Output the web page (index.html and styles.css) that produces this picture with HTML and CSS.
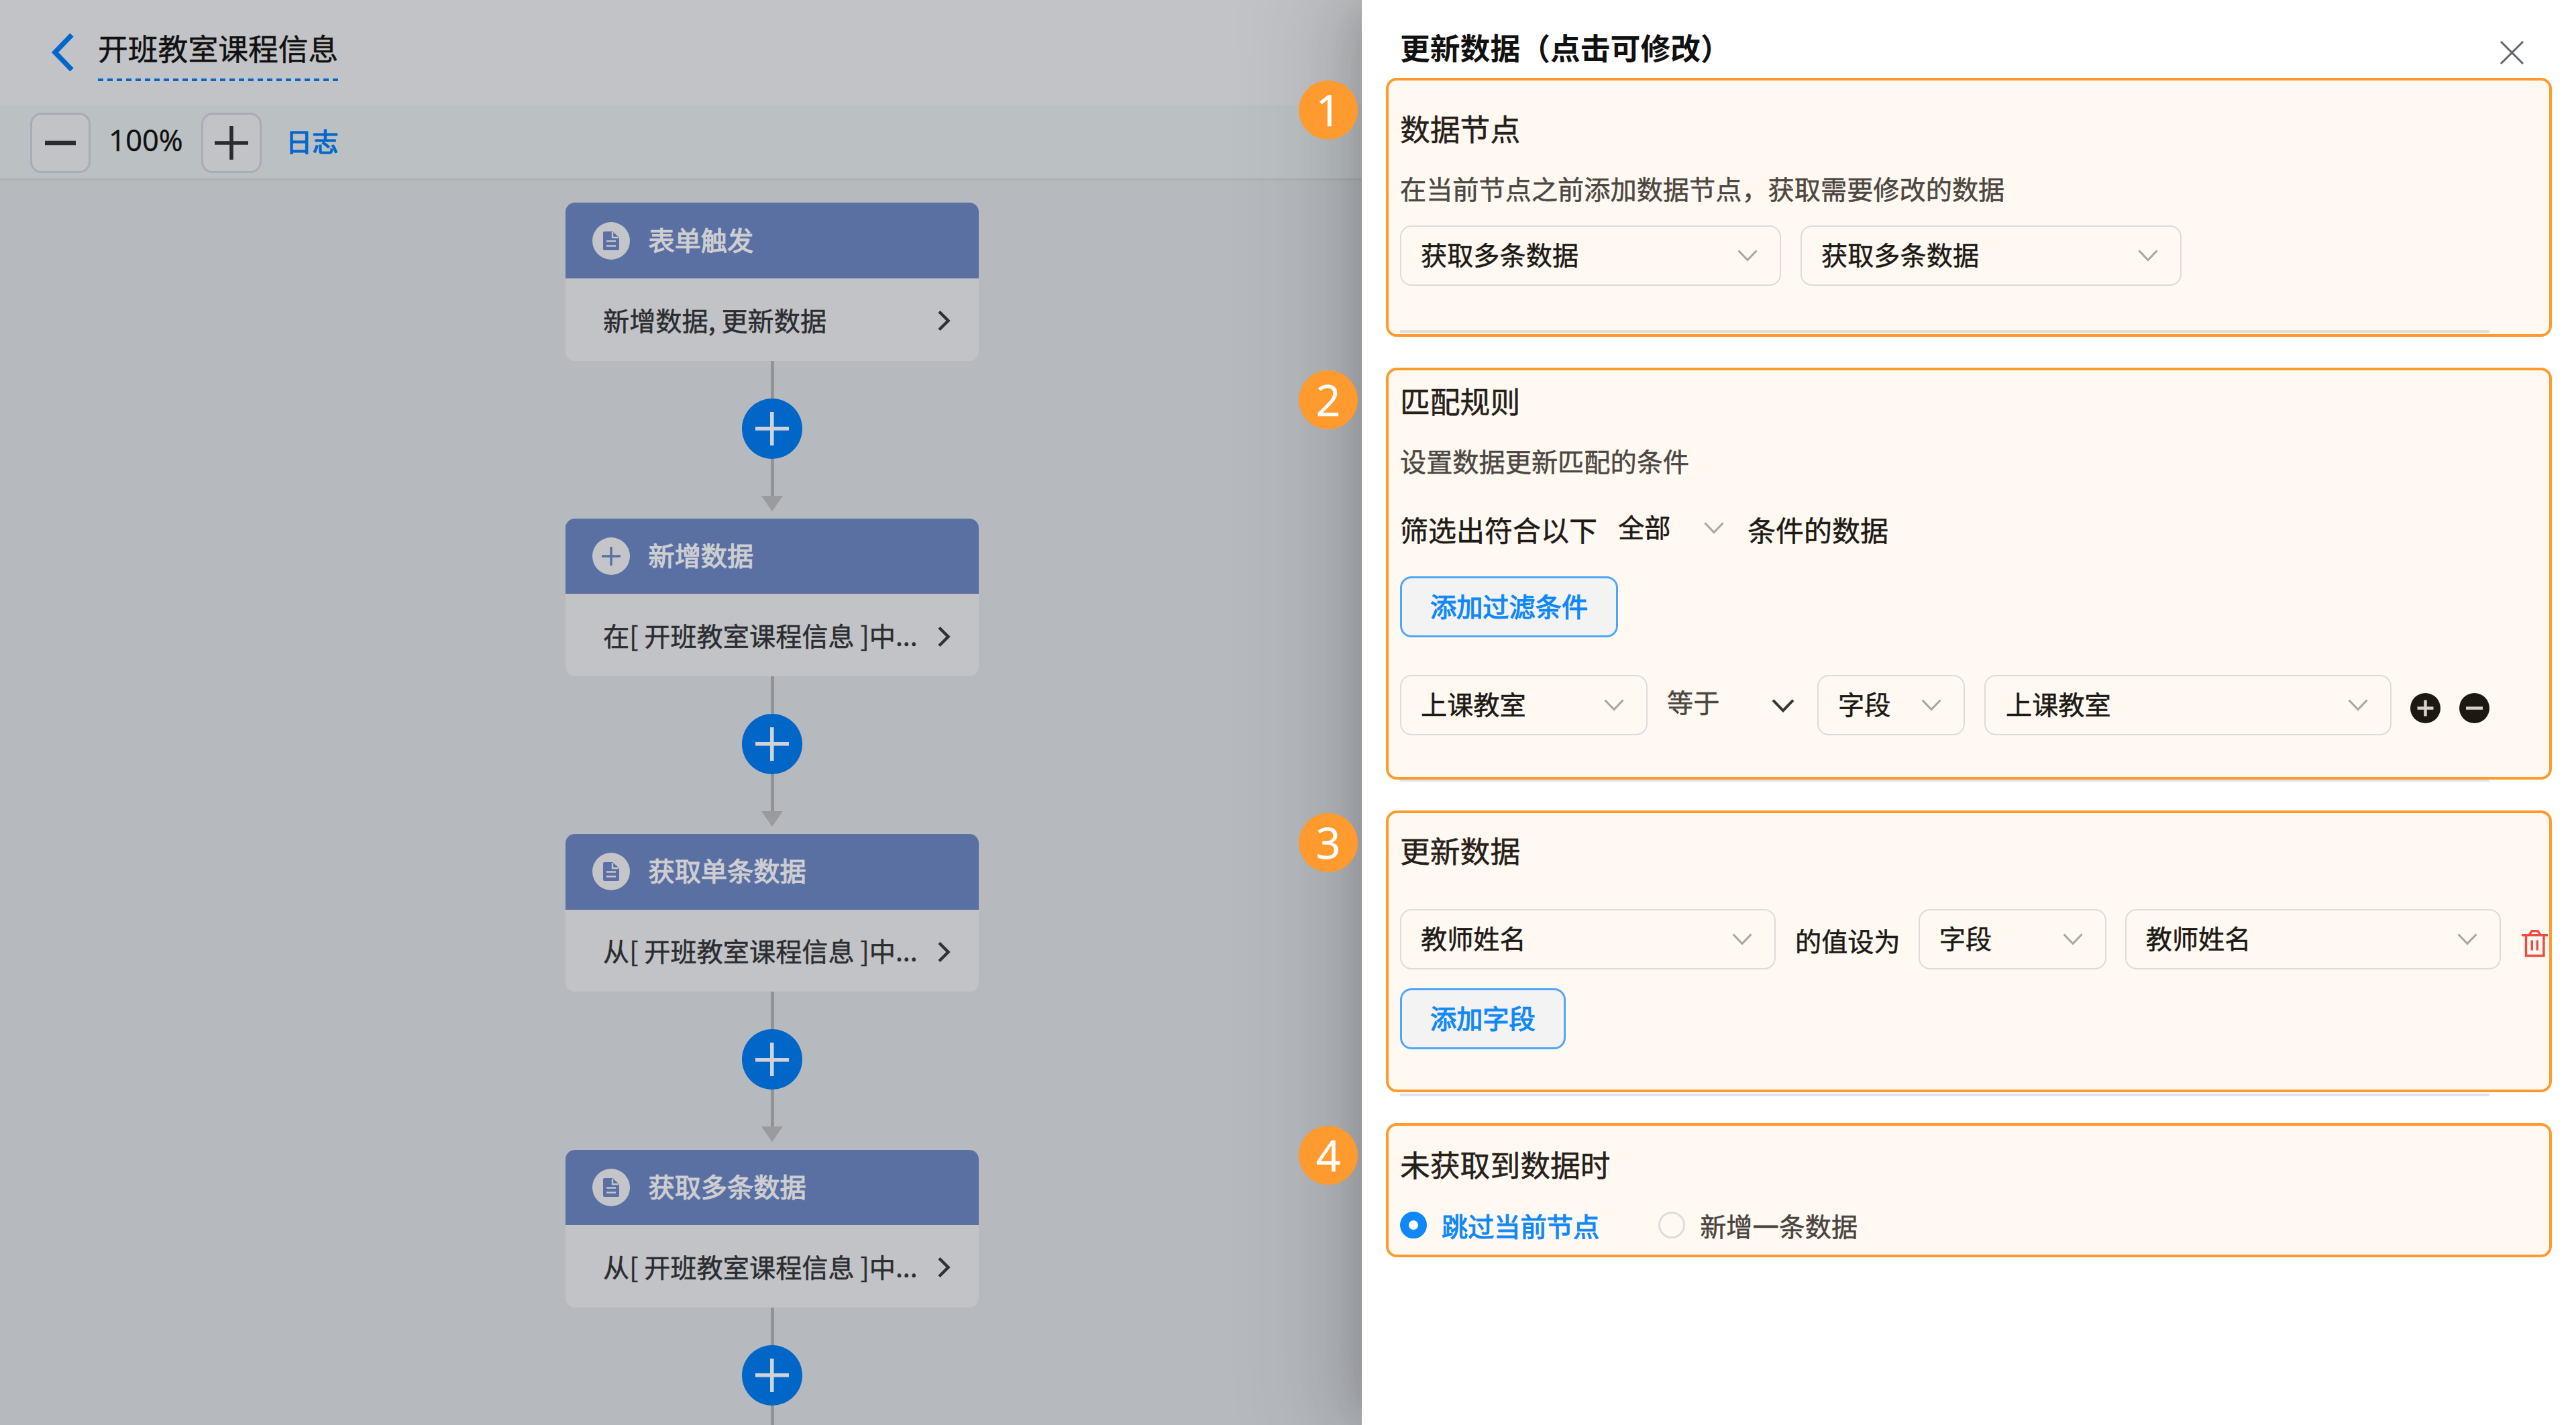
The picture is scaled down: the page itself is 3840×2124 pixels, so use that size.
FILE: index.html
```html
<!DOCTYPE html>
<html lang="zh-CN">
<head>
<meta charset="utf-8">
<title>开班教室课程信息</title>
<link rel="stylesheet" href="styles.css">
</head>
<body>
<svg class="sprite" width="0" height="0">
  <symbol id="down" viewBox="0 0 30 18"><path d="M1.5 1.5 15 15.5 28.5 1.5"/></symbol>
  <symbol id="next" viewBox="0 0 20 32"><path d="M3 2.5 16.5 16 3 29.5"/></symbol>
  <symbol id="doc" viewBox="0 0 24 28"><path d="M2 0H14L24 9V26Q24 28 22 28H2Q0 28 0 26V2Q0 0 2 0Z" fill="#5a70a3"/><path d="M14 1V9H23M5 14.5H19M5 21.5H19" fill="none" stroke="#c4c5c8" stroke-width="2.4"/></symbol>
</svg>
<div class="app">
  <main class="editor">
    <header class="header">
      <svg class="back" viewBox="0 0 34 58"><path d="M30 3 5 29 30 55"/></svg>
      <h1 class="flow-name">开班教室课程信息</h1>
    </header>
    <div class="toolbar">
      <button class="zoom-btn"><svg viewBox="0 0 50 50"><path d="M2 25H48" stroke-width="6.5"/></svg></button>
      <span class="zoom-value">100%</span>
      <button class="zoom-btn"><svg viewBox="0 0 50 50"><path d="M0 25H50M25 0V50" stroke-width="5.6"/></svg></button>
      <a class="log">日志</a>
    </div>
    <div class="canvas">
      <article class="node">
        <div class="node-head"><span class="node-icon"><svg class="doc"><use href="#doc"/></svg></span><span class="node-name">表单触发</span></div>
        <div class="node-body"><span>新增数据, 更新数据</span><svg class="next"><use href="#next"/></svg></div>
      </article>
      <div class="link"><span class="add"></span><i class="arrow"></i></div>
      <article class="node">
        <div class="node-head"><span class="node-icon"><svg class="cross" viewBox="0 0 28 28"><path d="M0 14H28M14 0V28"/></svg></span><span class="node-name">新增数据</span></div>
        <div class="node-body"><span>在[ 开班教室课程信息 ]中...</span><svg class="next"><use href="#next"/></svg></div>
      </article>
      <div class="link"><span class="add"></span><i class="arrow"></i></div>
      <article class="node">
        <div class="node-head"><span class="node-icon"><svg class="doc"><use href="#doc"/></svg></span><span class="node-name">获取单条数据</span></div>
        <div class="node-body"><span>从[ 开班教室课程信息 ]中...</span><svg class="next"><use href="#next"/></svg></div>
      </article>
      <div class="link"><span class="add"></span><i class="arrow"></i></div>
      <article class="node">
        <div class="node-head"><span class="node-icon"><svg class="doc"><use href="#doc"/></svg></span><span class="node-name">获取多条数据</span></div>
        <div class="node-body"><span>从[ 开班教室课程信息 ]中...</span><svg class="next"><use href="#next"/></svg></div>
      </article>
      <div class="link"><span class="add"></span></div>
    </div>
  </main>

  <aside class="drawer">
    <header class="drawer-head">
      <h2 class="drawer-title">更新数据（点击可修改）</h2>
      <svg class="close" viewBox="0 0 36 36"><path d="M1 1 35 35M35 1 1 35"/></svg>
    </header>

    <section class="panel panel-source">
      <span class="badge">1</span>
      <h3>数据节点</h3>
      <p class="desc">在当前节点之前添加数据节点，获取需要修改的数据</p>
      <div class="row">
        <div class="select w568">获取多条数据<svg class="down"><use href="#down"/></svg></div>
        <div class="select w568">获取多条数据<svg class="down"><use href="#down"/></svg></div>
      </div>
      <hr class="rule">
    </section>

    <section class="panel panel-match">
      <span class="badge">2</span>
      <h3>匹配规则</h3>
      <p class="desc">设置数据更新匹配的条件</p>
      <div class="sentence">筛选出符合以下<span class="inline-select">全部<svg class="down"><use href="#down"/></svg></span>条件的数据</div>
      <button class="btn">添加过滤条件</button>
      <div class="row">
        <div class="select w369">上课教室<svg class="down"><use href="#down"/></svg></div>
        <div class="operator">等于<svg class="down dark"><use href="#down"/></svg></div>
        <div class="select w220">字段<svg class="down"><use href="#down"/></svg></div>
        <div class="select w606">上课教室<svg class="down"><use href="#down"/></svg></div>
        <svg class="round" viewBox="0 0 45 45"><circle cx="22.5" cy="22.5" r="22.5"/><path d="M10.5 22.5H34.5M22.5 10.5V34.5"/></svg>
        <svg class="round" viewBox="0 0 45 45"><circle cx="22.5" cy="22.5" r="22.5"/><path d="M10 22.5H35"/></svg>
      </div>
    </section>
    <hr class="rule rule-match">

    <section class="panel panel-update">
      <span class="badge">3</span>
      <h3>更新数据</h3>
      <div class="row">
        <div class="select w560">教师姓名<svg class="down"><use href="#down"/></svg></div>
        <span class="set-to">的值设为</span>
        <div class="select w280">字段<svg class="down"><use href="#down"/></svg></div>
        <div class="select w560">教师姓名<svg class="down"><use href="#down"/></svg></div>
        <svg class="trash" viewBox="0 0 39 41"><path d="M0 7.7H39M6.5 7.7V38.5H33V7.7M11.5 7.5 15 1.7H24L28 7.5M15.3 15.5V30.5M23.3 15.5V30.5"/></svg>
      </div>
      <button class="btn">添加字段</button>
    </section>
    <hr class="rule rule-update">

    <section class="panel panel-empty">
      <span class="badge">4</span>
      <h3>未获取到数据时</h3>
      <div class="radios">
        <label class="radio on"><i></i>跳过当前节点</label>
        <label class="radio"><i></i>新增一条数据</label>
      </div>
    </section>
  </aside>
</div>
</body>
</html>
```
FILE: styles.css
```css
* { box-sizing: border-box; }
body {
  margin: 0;
  font-family: "Noto Sans CJK SC", "Noto Sans", sans-serif;
  font-size: 39.2px;
  line-height: 56px;
  color: #1d1a15;
  -webkit-text-stroke: .5px currentColor;
}
h1, h2, h3, p { margin: 0; font-weight: 400; }
svg { display: block; fill: none; flex: none; overflow: visible; }
button { font: inherit; padding: 0; margin: 0; }
.sprite { position: absolute; }
.app {
  width: 3840px;
  height: 2124px;
  overflow: hidden;
  display: grid;
  grid-template-columns: 2030px 1810px;
}

/* Flow editor, dimmed behind the drawer */
.editor { background: #b6b9be; height: 2124px; overflow: hidden; }
.header {
  height: 157px;
  background: #c2c3c6;
  display: flex;
  align-items: flex-start;
  padding: 46px 0 0 77px;
}
.back { width: 34px; height: 58px; margin: 3px 35px 0 0; stroke: #0067cb; stroke-width: 7.5; }
.flow-name {
  font-size: 44.8px;
  line-height: 50px;
  height: 75px;
  color: #111;
  background: repeating-linear-gradient(90deg, #0067cb 0 8.4px, transparent 8.4px 14px) 0 100% / 100% 4px no-repeat;
}
.toolbar {
  height: 112px;
  background: #bbc0c3;
  border-bottom: 3px solid #adafb2;
  display: flex;
  align-items: flex-start;
  padding: 11px 0 0 45px;
}
.zoom-btn {
  width: 90px;
  height: 90px;
  border: 3px solid #a9abb6;
  border-radius: 17px;
  background: #c2c3c6;
  display: grid;
  place-items: center;
}
.zoom-btn svg { width: 50px; height: 50px; stroke: #2a2b2e; }
.zoom-value {
  width: 165px;
  text-align: center;
  font-family: "Open Sans", "Noto Sans", sans-serif;
  font-size: 43.4px;
  line-height: 82px;
  color: #111;
}
.log { margin-left: 36px; line-height: 83px; color: #0067cb; -webkit-text-stroke-width: 1.2px; }

.canvas {
  padding: 33.4px 0 0 843px;
  width: 1459px;
  display: flex;
  flex-direction: column;
}
.node { height: 235.2px; flex: none; border-radius: 14px; overflow: hidden; background: #c2c3c6; }
.node-head {
  height: 112.5px;
  background: #5a70a3;
  color: #cdced1;
  display: flex;
  align-items: center;
  padding-left: 39.5px;
  gap: 28px;
  -webkit-text-stroke-width: 1.2px;
}
.node-name { padding-bottom: 6px; }
.node-icon {
  width: 56px;
  height: 56px;
  border-radius: 50%;
  background: #c4c5c8;
  display: grid;
  place-items: center;
}
.doc { width: 24px; height: 28px; }
.cross { width: 28px; height: 28px; stroke: #5a70a3; stroke-width: 3.5; }
.node-body {
  height: 122.7px;
  display: flex;
  align-items: center;
  justify-content: space-between;
  padding: 4px 42px 0 56px;
  color: #2b2d30;
}
.node-body span { padding-bottom: 5px; }
.next { width: 20px; height: 32px; stroke: #2f3134; stroke-width: 4.5; }
.link {
  height: 235.2px;
  flex: none;
  display: flex;
  flex-direction: column;
  align-items: center;
  padding-top: 56px;
  background: linear-gradient(#919395, #919395) 50% 0 / 5px 202px no-repeat;
}
.add {
  width: 90px;
  height: 90px;
  border-radius: 50%;
  background:
    linear-gradient(#cfd2d8, #cfd2d8) 50% 50% / 50px 5.6px no-repeat,
    linear-gradient(#cfd2d8, #cfd2d8) 50% 50% / 5.6px 50px no-repeat,
    #0067c8;
}
.arrow {
  margin-top: 55px;
  border: 16px solid transparent;
  border-bottom: 0;
  border-top: 23px solid #999b9e;
}

/* Settings drawer */
.drawer {
  position: relative;
  z-index: 1;
  background: #fff;
  padding: 0 36px;
  box-shadow: -17px 0 45px -22px rgba(0,0,0,.12), -25px 0 78px rgba(0,0,0,.08), -34px 0 134px 40px rgba(0,0,0,.09);
}
.drawer-head {
  height: 116px;
  padding: 45px 42px 0 21px;
  display: flex;
  justify-content: space-between;
}
.drawer-title {
  font-size: 44.8px;
  line-height: 50px;
  height: 76px;
  font-weight: 700;
  color: #111;
  -webkit-text-stroke-width: 0;
  background: repeating-linear-gradient(90deg, #7db9ee 0 8.4px, transparent 8.4px 14px) 0 100% / 100% 4px no-repeat;
}
.close { width: 35px; height: 35px; margin-top: 16px; stroke: #5f646b; stroke-width: 3; }
.panel {
  position: relative;
  border: 4px solid #ff9a2e;
  border-radius: 16px;
  background: #fff9f2;
  padding: 0 0 0 17px;
}
.panel h3 { font-size: 44.8px; color: #262019; }
.panel-source { height: 386px; padding-top: 43px; background-clip: padding-box; }
.panel-match { height: 614px; margin-top: 46px; padding-top: 17px; }
.panel-update { height: 420px; margin-top: 43px; padding-top: 27px; }
.panel-empty { height: 200px; margin-top: 40px; padding-top: 29px; }
.badge {
  position: absolute;
  left: -134px;
  top: 0;
  width: 88px;
  height: 88px;
  border-radius: 50%;
  background: #ff9a2e;
  color: #fff;
  font-family: "Open Sans", "Noto Sans", sans-serif;
  font-size: 64px;
  line-height: 88px;
  text-align: center;
}
.desc { color: #4d4741; margin-top: 33px; }
.row { display: flex; align-items: center; }
.select {
  height: 90px;
  border: 2.8px solid #dfdbd9;
  border-radius: 17px;
  display: flex;
  align-items: center;
  justify-content: space-between;
  padding: 0 33px 6px 29px;
}
.select .down { margin-top: 6px; }
.down { width: 30px; height: 18px; stroke: #aaa69f; stroke-width: 3; }
.down.dark { width: 34px; height: 20px; stroke: #3a3530; stroke-width: 3.6; }
.w568 { width: 568px; }
.w560 { width: 560px; }
.w369 { width: 369px; }
.w220 { width: 220px; }
.w280 { width: 280px; }
.w606 { width: 607px; }
.rule { margin: 0; border: 0; height: 4px; width: 1624px; background: #e2ded9; }

.panel-source .row { margin-top: 28px; gap: 29px; }
.panel-source .rule { margin-top: 66px; }

.sentence { display: flex; align-items: center; font-size: 42px; margin-top: 47px; }
.inline-select {
  display: flex;
  align-items: center;
  justify-content: space-between;
  font-size: 39.2px;
  width: 158px;
  margin: -10px 35px 0 31px;
}
.inline-select .down { margin-top: 6px; }
.btn {
  display: block;
  height: 91px;
  padding: 0 42px 5px;
  border: 3px solid #4fa6f8;
  border-radius: 17px;
  background: #f3f3f3;
  color: #1088f8;
  -webkit-text-stroke: 1.2px #1088f8;
}
.panel-match .btn { margin-top: 42px; }
.panel-match .row { margin-top: 56px; }
.operator {
  width: 190px;
  margin: -13px 34px 0 29px;
  display: flex;
  align-items: center;
  justify-content: space-between;
  color: #4d4741;
}
.operator .down { margin-top: 14px; }
.panel-match .w606 { margin: 0 28px 0 29px; padding-left: 30px; }
.round { width: 45px; height: 45px; margin: 9px 28px 0 0; stroke: #d8d2cb; stroke-width: 4.5; }
.round circle { fill: #1e1812; stroke: none; }
.rule-match { height: 3px; margin-left: 21px; background: #e3e3ea; }

.panel-update .row { margin-top: 60px; }
.set-to { margin: 2px 27px 0 29px; }
.panel-update .w280 { margin-right: 28px; }
.trash { width: 39px; height: 41px; margin: 12px 0 0 31px; stroke: #ee4a40; stroke-width: 3.4; }
.panel-update .btn { margin-top: 28px; }
.rule-update { margin: 2px 0 0 21px; background: #dfe3ea; }

.radios { display: flex; gap: 88px; margin-top: 35px; }
.radio { display: flex; align-items: center; gap: 22px; color: #4a443e; }
.radio i { width: 40px; height: 40px; border-radius: 50%; border: 3px solid #e0dcd9; }
.radio.on { color: #1088f8; -webkit-text-stroke: 1.2px #1088f8; }
.radio.on i { border: 13px solid #1088f8; background: #fff; }
```
